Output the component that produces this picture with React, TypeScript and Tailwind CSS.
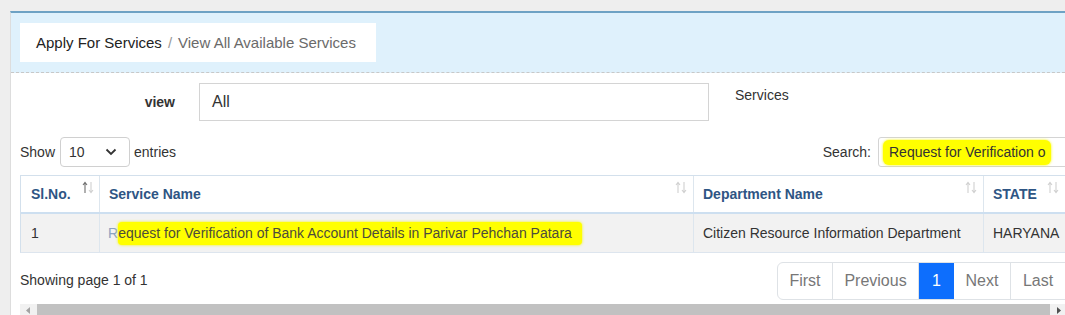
import React from "react";

function SortIcon({ active }: { active?: boolean }) {
  const up = active ? "#707070" : "#d0d0d0";
  const down = "#d0d0d0";
  return (
    <svg width="12" height="13" viewBox="0 0 12 13">
      <path d="M3 12 V1.5 M1 4 L3 1.5 L5 4" fill="none" stroke={up} strokeWidth="1.1" />
      <path d="M9 1 V11.5 M7 9 L9 11.5 L11 9" fill="none" stroke={down} strokeWidth="1.1" />
    </svg>
  );
}

export default function App() {
  const font = { fontFamily: '"Liberation Sans", Arial, sans-serif' };
  return (
    <div
      className="w-[1065px] h-[315px] overflow-hidden bg-[#eeeeee] pt-[11px] pl-[10px]"
      style={font}
    >
      <div className="w-[1100px] h-[320px] bg-white border-t-2 border-[#6ea2c4] border-l border-l-[#dddddd]">
        {/* header */}
        <div className="h-[60px] bg-[#dff1fc] border-b border-dashed border-[#c8c8c8] pt-[10px] pl-[9px]">
          <div className="w-[356px] h-[39px] bg-white flex items-center pl-[16px] pt-[2px] text-[15px]">
            <span className="text-[#222222]">Apply For Services</span>
            <span className="text-[#9a9a9a] mx-[6px]">/</span>
            <span className="text-[#6a6a6a]">View All Available Services</span>
          </div>
        </div>

        {/* body */}
        <div className="pl-[9px]">
          <div className="flex items-start pt-[10px] h-[64px]">
            <div className="w-[179px] h-[38px] flex items-center justify-end text-[14px] font-bold text-[#333333] pr-[24px]">
              view
            </div>
            <div className="w-[510px] h-[38px] border border-[#d4d4d4] flex items-center pl-[12px] text-[16px] text-[#333333]">
              All
            </div>
            <div className="ml-[26px] pt-[2px] text-[14px] text-[#333333]">Services</div>
          </div>

          <div className="flex items-center h-[30px]">
            <span className="text-[14px] text-[#333333]">Show</span>
            <div className="ml-[5px] w-[70px] h-[30px] border border-[#d0d0d0] rounded-[4px] flex items-center justify-between pl-[8px] pr-[12px] text-[14px] text-[#333333]">
              <span>10</span>
              <svg width="12" height="8" viewBox="0 0 12 8">
                <path d="M1.5 1.5 L6 6 L10.5 1.5" fill="none" stroke="#333" strokeWidth="1.8" />
              </svg>
            </div>
            <span className="ml-[4px] text-[14px] text-[#333333]">entries</span>
            <span className="ml-[auto] text-[14px] text-[#333333]">Search:</span>
            <div className="ml-[7px] w-[220px] h-[30px] border border-[#d4d4d4] rounded-[3px] flex items-center pl-[4px] mr-[12px]">
              <span className="bg-[#ffff00] rounded-[6px] px-[6px] py-[2px] text-[14px] text-[#333333] shadow-[0_0_3px_#f6f600]">
                Request for Verification o
              </span>
            </div>
          </div>

          {/* table */}
          <div className="mt-[8px] w-[1080px] border border-[#d3e0ec] border-b-[#dde5ee]">
            <div className="flex h-[38px] border-b-2 border-[#cddff0] text-[14px] font-bold text-[#2e5584]">
              <div className="w-[79px] flex items-center pl-[10px] pr-[5px] justify-between border-r border-[#dde6ee]">
                <span>Sl.No.</span>
                <span className="self-start pt-[5px]"><SortIcon active /></span>
              </div>
              <div className="w-[594px] flex items-center pl-[9px] pr-[6px] justify-between border-r border-[#dde6ee]">
                <span>Service Name</span>
                <span className="self-start pt-[5px]"><SortIcon /></span>
              </div>
              <div className="w-[290px] flex items-center pl-[9px] pr-[6px] justify-between border-r border-[#dde6ee]">
                <span>Department Name</span>
                <span className="self-start pt-[5px]"><SortIcon /></span>
              </div>
              <div className="flex-1 flex items-center pl-[9px] gap-[10px]">
                <span>STATE</span>
                <span className="self-start pt-[5px]"><SortIcon /></span>
              </div>
            </div>
            <div className="flex h-[38px] bg-[#f2f2f2] text-[14px] text-[#333333]">
              <div className="w-[79px] flex items-center pl-[10px] border-r border-[#dde6ee]">1</div>
              <div className="w-[594px] flex items-center pl-[8px] border-r border-[#dde6ee]">
                <span className="text-[#8aa3c2]">R</span>
                <span className="bg-[#ffff00] rounded-[4px] pr-[10px] py-[1px] text-[#4c4c3c] shadow-[0_0_3px_#f6f600]">
                  equest for Verification of Bank Account Details in Parivar Pehchan Patara
                </span>
              </div>
              <div className="w-[290px] flex items-center pl-[9px] border-r border-[#dde6ee]">
                Citizen Resource Information Department
              </div>
              <div className="flex-1 flex items-center pl-[9px]">HARYANA</div>
            </div>
          </div>

          {/* footer */}
          <div className="flex items-center h-[47px] pt-[8px] w-[1046px]">
            <span className="text-[14px] text-[#333333]">Showing page 1 of 1</span>
            <div className="ml-auto flex h-[38px] border border-[#dee2e6] rounded-l-[6px] text-[16px] text-[#777777]">
              <div className="w-[55px] flex items-center justify-center border-r border-[#dee2e6]">First</div>
              <div className="w-[86px] flex items-center justify-center border-r border-[#dee2e6]">Previous</div>
              <div className="w-[35px] flex items-center justify-center bg-[#0d6efd] text-white">1</div>
              <div className="w-[57px] flex items-center justify-center border-r border-[#dee2e6]">Next</div>
              <div className="w-[54px] flex items-center justify-center">Last</div>
            </div>
          </div>

          {/* scrollbar */}
          <div className="mt-[4px] w-[1046px] h-[13px] bg-[#f1f1f1] flex items-center">
            <div className="w-[17px] flex justify-center">
              <svg width="5" height="7" viewBox="0 0 5 7"><path d="M4 0 L0 3.5 L4 7 Z" fill="#a3a3a3" /></svg>
            </div>
            <div className="flex-1 h-[13px] bg-[#c1c1c1]" />
            <div className="w-[16px] flex justify-center">
              <svg width="5" height="7" viewBox="0 0 5 7"><path d="M1 0 L5 3.5 L1 7 Z" fill="#505050" /></svg>
            </div>
          </div>
        </div>
      </div>
    </div>
  );
}
